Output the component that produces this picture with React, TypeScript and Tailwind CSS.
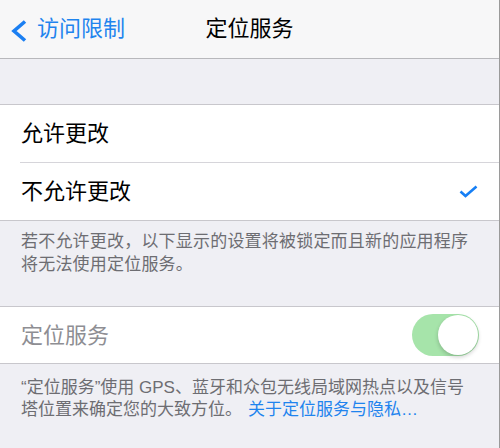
export default function App() {
  return (
    <div className="h-[448px] w-[500px] overflow-hidden border-r border-[#9a9a9a] bg-[#efeff4] font-['Liberation_Sans','Noto_Sans_CJK_SC',sans-serif]">
      <div className="grid h-[59px] grid-cols-[1fr_auto_1fr] items-center border-b border-[#b8b8bc] bg-[#f7f7f8]">
        <div className="flex items-center pl-[11px]">
          <svg width="16" height="22" viewBox="0 0 16 22" className="mt-[4px]">
            <path d="M14 1.5 L3 11 L14 20.5" fill="none" stroke="#1b7ff2" strokeWidth="3.6" strokeLinejoin="miter" />
          </svg>
          <span className="ml-[10px] text-[22px] leading-none text-[#1f84ee]">访问限制</span>
        </div>
        <span className="text-[22px] leading-none text-black">定位服务</span>
        <div />
      </div>
      <div className="h-[45px]" />
      <div className="border-y border-[#c8c7cc] bg-white">
        <div className="flex h-[57px] items-center pl-[21px] text-[22px] text-black">允许更改</div>
        <div className="ml-[20px] h-px bg-[#d6d5da]" />
        <div className="flex h-[57px] items-center justify-between pl-[21px] pr-[21px] text-[22px] text-black">
          <span>不允许更改</span>
          <svg width="19" height="13" viewBox="0 0 19 13">
            <path d="M1.5 6.5 L6.5 11 L17.5 1.5" fill="none" stroke="#167ff5" strokeWidth="2.6" />
          </svg>
        </div>
      </div>
      <div className="h-[85px] px-[21px] pt-[9px] text-[17px] leading-[23px] tracking-[0.2px] text-[#6d6d72]">
        若不允许更改，以下显示的设置将被锁定而且新的应用程序将无法使用定位服务。
      </div>
      <div className="border-y border-[#c8c7cc] bg-white">
        <div className="flex h-[56px] items-center justify-between pl-[21px] pr-[20px]">
          <span className="text-[22px] text-[#8e8e93]">定位服务</span>
          <div className="flex h-[42px] w-[67px] items-center justify-end rounded-full bg-[#a6e4aa] p-px">
            <div className="h-[40px] w-[40px] rounded-full bg-white shadow-[0_2px_4px_rgba(0,0,0,0.2)]" />
          </div>
        </div>
      </div>
      <div className="px-[21px] pt-[13px] text-[17px] leading-[22px] text-[#6d6d72]">
        <p>“定位服务”使用 GPS、蓝牙和众包无线局域网热点以及信号</p>
        <p>
          <span>塔位置来确定您的大致方位。</span>
          <span className="ml-[6px] text-[#1f84ee]">关于定位服务与隐私…</span>
        </p>
      </div>
    </div>
  );
}
